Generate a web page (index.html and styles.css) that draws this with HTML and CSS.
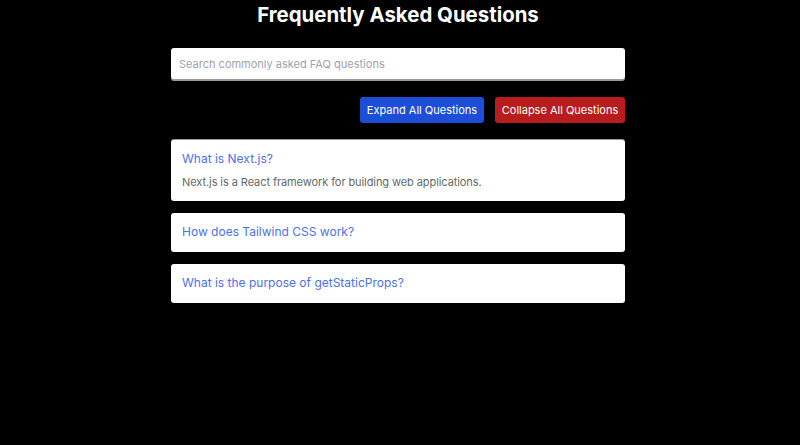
FILE: index.html
```html
<!DOCTYPE html>
<html lang="en">
<head>
<meta charset="utf-8">
<title>FAQ</title>
<link rel="stylesheet" href="styles.css">
</head>
<body>
<main class="page">
  <h1 class="title">Frequently Asked Questions</h1>
  <div class="wrap">
    <input class="search" type="text" placeholder="Search commonly asked FAQ questions">
    <div class="actions">
      <button class="btn btn-blue">Expand All Questions</button>
      <button class="btn btn-red">Collapse All Questions</button>
    </div>
    <div class="list">
      <div class="card card-open">
        <div class="q">What is Next.js?</div>
        <div class="a">Next.js is a React framework for building web applications.</div>
      </div>
      <div class="card">
        <div class="q">How does Tailwind CSS work?</div>
      </div>
      <div class="card">
        <div class="q">What is the purpose of getStaticProps?</div>
      </div>
    </div>
  </div>
</main>
</body>
</html>
```
FILE: styles.css
```css
* { box-sizing: border-box; }
html, body { margin: 0; padding: 0; background: #000; }
body { font-family: Inter, "Noto Sans", sans-serif; }
.page { display: flex; flex-direction: column; align-items: center; padding: 3px 4px 0 0; }
.title { margin: 0; color: #fff; font-size: 20.4px; font-weight: 700; line-height: 24px; }
.wrap { width: 454px; margin-top: 21px; display: flex; flex-direction: column; }
.search { width: 100%; height: 31px; border: none; border-radius: 3px; background: #fff; padding: 0 8px; font-family: inherit; font-size: 11px; color: #333; box-shadow: 0 2px 0 #9a9a9a; outline: none; }
.search::placeholder { color: #9ca3af; }
.actions { display: flex; justify-content: flex-end; gap: 11px; margin-top: 18px; }
.btn { height: 26px; border: none; border-radius: 3px; color: #fff; font-family: inherit; font-size: 11px; font-weight: 400; padding: 0; white-space: nowrap; }
.btn-blue { background: #1d4ed8; width: 124px; }
.btn-red { background: #b91c1c; width: 130px; }
.list { display: flex; flex-direction: column; gap: 12px; margin-top: 17px; }
.card { background: #fff; border-radius: 3px; padding: 11px 11px 12px; }
.card-open { box-shadow: 0 -1px 0 #9a9a9a; }
.q { color: #4f6ef0; font-size: 12px; line-height: 16px; }
.a { color: #5f6b63; font-size: 11px; line-height: 14px; margin-top: 8px; letter-spacing: -0.08px; }
```
